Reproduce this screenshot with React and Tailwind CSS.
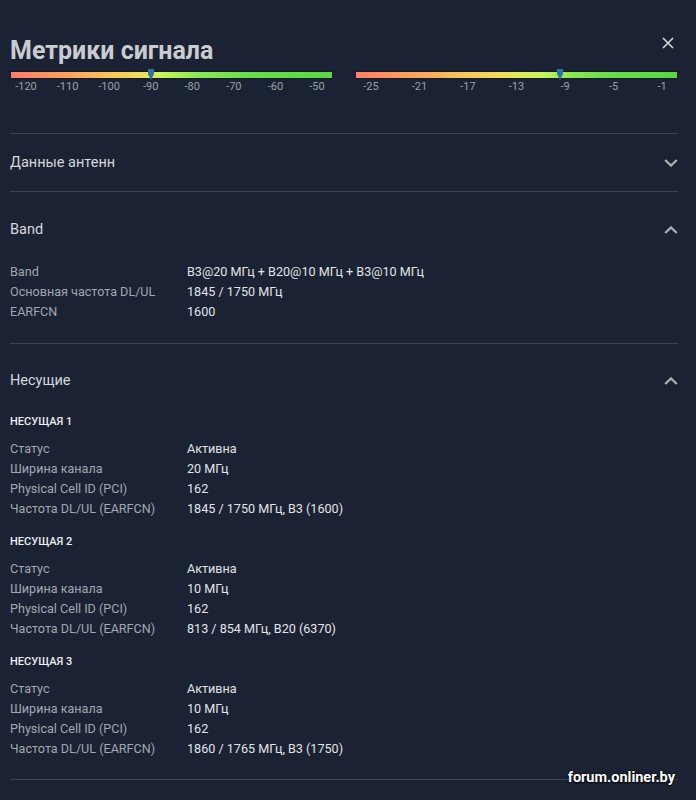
import React from "react";

const font = { fontFamily: "Roboto, 'Noto Sans', sans-serif" };

function Chevron({ up }) {
  return (
    <svg width="14" height="8" viewBox="0 0 14 8" className="shrink-0">
      <path
        d={up ? "M1.2 7 L7 1.5 L12.8 7" : "M1.2 1 L7 6.5 L12.8 1"}
        fill="none"
        stroke="#a9adb4"
        strokeWidth="2.4"
      />
    </svg>
  );
}

function Marker({ left }) {
  return (
    <svg
      width="6"
      height="11"
      viewBox="0 0 6 11"
      className="absolute top-[-3px]"
      style={{ left: `calc(${left}% - 3px)` }}
    >
      <path d="M0 0 H6 V5 L3 11 L0 5 Z" fill="#2f72ab" />
    </svg>
  );
}

function Scale({ labels, marker, gradient }) {
  return (
    <div>
      <div className={`relative h-[8px] border border-[#141a26] ${gradient}`}>
        <Marker left={marker} />
      </div>
      <div className="mt-[1px] flex justify-between text-[11px] leading-[14px] text-[#9ba0a8]">
        {labels.map((l) => (
          <span key={l} className="w-8 text-center">
            {l}
          </span>
        ))}
      </div>
    </div>
  );
}

function Row({ label, value }) {
  return (
    <div className="flex h-[20px] items-center text-[12.6px] leading-[20px]">
      <span className="w-[177px] shrink-0 text-[#a2a7af]">{label}</span>
      <span className="text-[#e2e4e7]">{value}</span>
    </div>
  );
}

function Carrier({ n, mt, rows }) {
  return (
    <div className={mt}>
      <div className="text-[11px] font-medium leading-[14px] text-[#eceef0]">
        НЕСУЩАЯ {n}
      </div>
      <div className="mt-[10px]">
        {rows.map(([l, v]) => (
          <Row key={l} label={l} value={v} />
        ))}
      </div>
    </div>
  );
}

const Sep = () => <div className="h-px bg-[#3a4252]" />;

export default function App() {
  return (
    <div
      className="relative min-h-screen w-full bg-[#1b2233] pl-[10px] pr-[18px] pt-[35px]"
      style={font}
    >
      <div className="flex h-[32px] items-start justify-between">
        <h1 className="text-[25px] font-bold leading-[32px] text-[#c9ccd1]">
          Метрики сигнала
        </h1>
        <button className="-mt-[2px] flex h-[20px] w-[20px] items-center justify-center">
          <svg width="12" height="12" viewBox="0 0 12 12">
            <path
              d="M1 1 L11 11 M11 1 L1 11"
              stroke="#d3d6da"
              strokeWidth="1.6"
              fill="none"
            />
          </svg>
        </button>
      </div>

      <div className="mt-[4px] grid grid-cols-2 gap-[22px]">
        <Scale
          labels={["-120", "-110", "-100", "-90", "-80", "-70", "-60", "-50"]}
          marker={43.7}
          gradient="bg-[linear-gradient(to_right,#ff7d68_0%,#fca25f_18%,#f7c35c_30%,#f2dc5c_40%,#c9f55b_47%,#8ee853_58%,#68dc4b_75%,#5cd646_100%)]"
        />
        <Scale
          labels={["-25", "-21", "-17", "-13", "-9", "-5", "-1"]}
          marker={63.5}
          gradient="bg-[linear-gradient(to_right,#ff7d68_0%,#fca25f_18%,#f7c35c_32%,#f2dc5c_44%,#c9f55b_58%,#8ee853_66%,#68dc4b_80%,#5cd646_100%)]"
        />
      </div>

      <div className="mt-[39px]">
        <Sep />
        <div className="flex h-[57px] items-center justify-between pt-[1px]">
          <span className="text-[14.5px] leading-[20px] text-[#d5d7db]">
            Данные антенн
          </span>
          <Chevron />
        </div>
        <Sep />

        <div className="pt-[28px] pb-[21px]">
          <div className="flex h-[20px] items-center justify-between">
            <span className="text-[14.5px] leading-[20px] text-[#d5d7db]">Band</span>
            <Chevron up />
          </div>
          <div className="mt-[22px]">
            <Row label="Band" value="B3@20 МГц + B20@10 МГц + B3@10 МГц" />
            <Row label="Основная частота DL/UL" value="1845 / 1750 МГц" />
            <Row label="EARFCN" value="1600" />
          </div>
        </div>
        <Sep />

        <div className="pt-[27px] pb-[20px]">
          <div className="flex h-[20px] items-center justify-between">
            <span className="text-[14.5px] leading-[20px] text-[#d5d7db]">Несущие</span>
            <Chevron up />
          </div>
          <Carrier
            n={1}
            mt="mt-[24px]"
            rows={[
              ["Статус", "Активна"],
              ["Ширина канала", "20 МГц"],
              ["Physical Cell ID (PCI)", "162"],
              ["Частота DL/UL (EARFCN)", "1845 / 1750 МГц, B3 (1600)"],
            ]}
          />
          <Carrier
            n={2}
            mt="mt-[16px]"
            rows={[
              ["Статус", "Активна"],
              ["Ширина канала", "10 МГц"],
              ["Physical Cell ID (PCI)", "162"],
              ["Частота DL/UL (EARFCN)", "813 / 854 МГц, B20 (6370)"],
            ]}
          />
          <Carrier
            n={3}
            mt="mt-[16px]"
            rows={[
              ["Статус", "Активна"],
              ["Ширина канала", "10 МГц"],
              ["Physical Cell ID (PCI)", "162"],
              ["Частота DL/UL (EARFCN)", "1860 / 1765 МГц, B3 (1750)"],
            ]}
          />
        </div>
        <Sep />
      </div>

      <div className="absolute right-[21px] top-[770px] text-[14.5px] font-bold leading-[16px] text-white [text-shadow:0_0_2px_#000,0_1px_2px_#000]">
        forum.onliner.by
      </div>
    </div>
  );
}
